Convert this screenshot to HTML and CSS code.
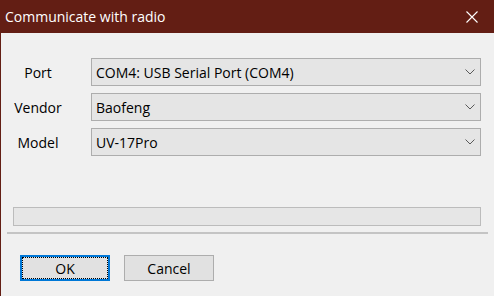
FILE: index.html
```html
<!DOCTYPE html>
<html lang="en">
<head>
    <meta charset="UTF-8">
    <title>Communicate with radio</title>
    <link rel="stylesheet" href="styles.css">
</head>
<body>
    <div class="window">
        <div class="titlebar">
            <span class="title">Communicate with radio</span>
            <svg class="close" width="12" height="12" viewBox="0 0 12 12">
                <path d="M0.5 0.5 L11.5 11.5 M11.5 0.5 L0.5 11.5" stroke="#fff" stroke-width="1.1" fill="none"/>
            </svg>
        </div>
        <div class="content">
            <div class="form">
                <div class="label">Port</div>
                <div class="combo">
                    <span>COM4: USB Serial Port (COM4)</span>
                    <svg class="chevron" width="10" height="6" viewBox="0 0 10 6"><path d="M0.5 0.5 L5 5 L9.5 0.5" stroke="#5a5a5a" fill="none"/></svg>
                </div>
                <div class="label">Vendor</div>
                <div class="combo">
                    <span>Baofeng</span>
                    <svg class="chevron" width="10" height="6" viewBox="0 0 10 6"><path d="M0.5 0.5 L5 5 L9.5 0.5" stroke="#5a5a5a" fill="none"/></svg>
                </div>
                <div class="label">Model</div>
                <div class="combo">
                    <span>UV-17Pro</span>
                    <svg class="chevron" width="10" height="6" viewBox="0 0 10 6"><path d="M0.5 0.5 L5 5 L9.5 0.5" stroke="#5a5a5a" fill="none"/></svg>
                </div>
            </div>
            <div class="progress"></div>
            <div class="separator"></div>
            <div class="buttons">
                <div class="button default"><span class="focus">OK</span></div>
                <div class="button">Cancel</div>
            </div>
        </div>
    </div>
</body>
</html>
```

FILE: styles.css
```css
body {
    margin: 0;
    padding: 0;
    background-color: #f0f0f0;
    font-family: "Open Sans", "Noto Sans", sans-serif;
    font-size: 14px;
    color: #000;
}
.window {
    width: 494px;
    height: 296px;
    box-sizing: border-box;
    border-left: 1px solid #631e14;
    display: flex;
    flex-direction: column;
    overflow: hidden;
}
.titlebar {
    height: 33px;
    background-color: #631e14;
    color: #fff;
    display: flex;
    align-items: center;
    justify-content: space-between;
    padding: 0 16px 0 4px;
    flex-shrink: 0;
}
.title {
    font-size: 14px;
}
.content {
    flex: 1;
    background-color: #f0f0f0;
}
.form {
    display: grid;
    grid-template-columns: 60px 1fr;
    grid-auto-rows: 28px;
    column-gap: 23px;
    row-gap: 7px;
    padding: 25px 13px 0 7px;
}
.label {
    display: flex;
    align-items: center;
    justify-content: center;
}
.combo {
    display: flex;
    align-items: center;
    justify-content: space-between;
    background-color: #e5e5e5;
    border: 1px solid #adadad;
    padding: 0 5px 0 4px;
}
.progress {
    height: 17px;
    margin: 51px 13px 0 12px;
    background-color: #e6e6e6;
    border: 1px solid #bcbcbc;
}
.separator {
    height: 2px;
    margin: 6px 6px 0 6px;
    background-color: #c4c4c4;
}
.buttons {
    display: flex;
    gap: 14px;
    padding: 21px 0 0 19px;
}
.button {
    width: 88px;
    height: 24px;
    display: flex;
    align-items: center;
    justify-content: center;
    background-color: #e1e1e1;
    border: 1px solid #adadad;
}
.button.default {
    width: 86px;
    height: 22px;
    border: 2px solid #0078d7;
    padding: 0;
}
.focus {
    display: flex;
    align-items: center;
    justify-content: center;
    width: 84px;
    height: 20px;
    border: 1px dotted #000;
}
```
